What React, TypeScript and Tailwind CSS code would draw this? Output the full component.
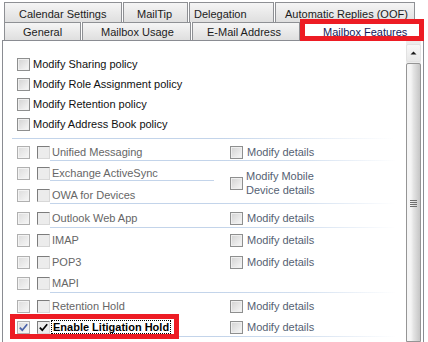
import React from "react";

type Kind = "std" | "dis" | "sunk";

function Check({ color }: { color: string }) {
  return (
    <svg width="11" height="11" viewBox="0 0 11 11" className="absolute left-0 top-0">
      <path d="M1.8 5.6 L4.3 8.2 L9.2 2.2" fill="none" stroke={color} strokeWidth="1.7" />
    </svg>
  );
}

function Box({ kind, checked }: { kind: Kind; checked?: string }) {
  const cls =
    kind === "std"
      ? "border border-[#8e8f8f] bg-gradient-to-br from-[#d2d2d2] to-[#f8f8f8] shadow-[inset_0_0_0_1px_#efefef]"
      : kind === "dis"
      ? "border border-[#b0b0b0] bg-gradient-to-br from-[#dcdcdc] to-[#f7f7f7] shadow-[inset_0_0_0_1px_#f3f3f3]"
      : "border border-t-[#7c7c7c] border-l-[#7c7c7c] border-b-[#d8d8d8] border-r-[#d8d8d8] bg-[#ececec]";
  return (
    <div className={`w-[13px] h-[13px] shrink-0 relative ${cls}`}>
      {checked ? <Check color={checked} /> : null}
    </div>
  );
}

function TopItem({ label, first }: { label: string; first?: boolean }) {
  return (
    <div className={`h-[14px] flex items-center pl-[14px] ${first ? "" : "mt-[6px]"}`}>
      <Box kind="std" />
      <span className="ml-[3px] leading-[14px] whitespace-nowrap text-[#111111]">{label}</span>
    </div>
  );
}

function LeftItem({ label, cls }: { label: string; cls: string }) {
  return (
    <div className={`h-[14px] flex items-center pl-[14px] ${cls}`}>
      <Box kind="dis" />
      <div className="w-[7px]" />
      <Box kind="sunk" />
      <span className="ml-[2px] leading-[14px] whitespace-nowrap text-[#666666]">{label}</span>
    </div>
  );
}

function RightItem({ cls }: { cls: string }) {
  return (
    <div className={`h-[14px] flex items-center pl-[16px] ${cls}`}>
      <Box kind="std" />
      <span className="ml-[4px] leading-[14px] whitespace-nowrap text-[#555f73]">Modify details</span>
    </div>
  );
}

function LeftLine() {
  return <div className="h-px w-[164px] ml-[47px] bg-[#c3d4ea] shrink-0" />;
}

function RightLine() {
  return <div className="h-px w-[182px] bg-gradient-to-r from-[#c3d4ea] via-[#d3e0f0] to-transparent shrink-0" />;
}

function Tab({ w, pl, h, label, selected }: { w: string; pl: string; h: string; label: string; selected?: boolean }) {
  return (
    <div
      className={`${w} ${h} ${pl} shrink-0 border border-b-0 border-[#8e9094] flex items-center whitespace-nowrap overflow-hidden ${
        selected ? "bg-white text-[#14185a]" : "bg-gradient-to-b from-[#f5f5f5] to-[#dfdfdf] text-[#1c1c1c]"
      }`}
    >
      <span className="leading-[13px]">{label}</span>
    </div>
  );
}

export default function App() {
  return (
    <div className="w-[428px] h-[342px] bg-white overflow-hidden relative font-['Liberation_Sans',Arial,sans-serif] text-[11px] flex flex-col">
      {/* tab row 1 */}
      <div className="flex pl-[4px] pt-[2px] gap-[1px]">
        <Tab w="w-[118px]" h="h-[20px] pt-[3px]" pl="pl-[14px]" label="Calendar Settings" />
        <Tab w="w-[65px]" h="h-[20px] pt-[3px]" pl="pl-[13px]" label="MailTip" />
        <Tab w="w-[85px]" h="h-[20px] pt-[3px]" pl="pl-[4px]" label="Delegation" />
        <Tab w="w-[140px]" h="h-[20px] pt-[3px]" pl="pl-[9px]" label="Automatic Replies (OOF)" />
      </div>
      {/* tab row 2 */}
      <div className="flex pl-[4px] gap-[1px]">
        <Tab w="w-[77px]" h="h-[18px] pt-[2px]" pl="pl-[18px]" label="General" />
        <Tab w="w-[109px]" h="h-[18px] pt-[2px]" pl="pl-[18px]" label="Mailbox Usage" />
        <Tab w="w-[108px]" h="h-[18px] pt-[2px]" pl="pl-[14px]" label="E-Mail Address" />
        <Tab w="w-[121px]" h="h-[18px] pt-[2px]" pl="pl-[21px]" label="Mailbox Features" selected />
      </div>

      {/* panel */}
      <div className="ml-[2px] w-[422px] flex-1 border-t border-l border-r border-[#8a8c92] flex min-h-0">
        <div className="w-[403px] flex flex-col">
          {/* top section */}
          <div className="pt-[16px] flex flex-col">
            <TopItem first label="Modify Sharing policy" />
            <TopItem label="Modify Role Assignment policy" />
            <TopItem label="Modify Retention policy" />
            <TopItem label="Modify Address Book policy" />
          </div>
          <div className="mt-[7px] ml-[9px] h-px w-[382px] bg-gradient-to-r from-[#c3d4ea] from-55% to-transparent" />

          {/* block A: Unified Messaging */}
          <div className="flex h-[22px]">
            <div className="w-[211px] flex flex-col">
              <LeftItem label="Unified Messaging" cls="mt-[6px]" />
              <div className="mt-auto"><LeftLine /></div>
            </div>
            <div className="flex-1 flex flex-col">
              <RightItem cls="mt-[6px]" />
              <div className="mt-auto"><RightLine /></div>
            </div>
          </div>

          {/* block B: ActiveSync + OWA devices */}
          <div className="flex h-[43px]">
            <div className="w-[211px] flex flex-col">
              <LeftItem label="Exchange ActiveSync" cls="mt-[5px]" />
              <LeftLine />
              <LeftItem label="OWA for Devices" cls="mt-[7px]" />
              <div className="mt-auto"><LeftLine /></div>
            </div>
            <div className="flex-1 flex flex-col">
              <div className="flex-1 flex items-center pl-[16px] pt-[2px]">
                <Box kind="std" />
                <span className="ml-[3px] leading-[14px] text-[#555f73]">
                  Modify Mobile
                  <br />
                  Device details
                </span>
              </div>
              <RightLine />
            </div>
          </div>

          {/* block C: Outlook Web App */}
          <div className="flex h-[24px]">
            <div className="w-[211px] flex flex-col">
              <LeftItem label="Outlook Web App" cls="mt-[7px]" />
              <div className="mt-auto"><LeftLine /></div>
            </div>
            <div className="flex-1 flex flex-col">
              <RightItem cls="mt-[7px]" />
              <div className="mt-auto"><RightLine /></div>
            </div>
          </div>

          {/* block D: IMAP / POP3 / MAPI */}
          <div className="flex h-[65px]">
            <div className="w-[211px] flex flex-col">
              <LeftItem label="IMAP" cls="mt-[5px]" />
              <LeftItem label="POP3" cls="mt-[8px]" />
              <LeftItem label="MAPI" cls="mt-[7px]" />
              <div className="mt-auto"><LeftLine /></div>
            </div>
            <div className="flex-1 flex flex-col">
              <RightItem cls="mt-[5px]" />
              <RightItem cls="mt-[8px]" />
              <div className="mt-auto"><RightLine /></div>
            </div>
          </div>

          {/* block E: Retention / Litigation */}
          <div className="flex h-[44px]">
            <div className="w-[211px] flex flex-col">
              <LeftItem label="Retention Hold" cls="mt-[6px]" />
              <div className="h-[14px] flex items-center pl-[14px] mt-[7px]">
                <Box kind="dis" checked="#4a62a8" />
                <div className="w-[7px]" />
                <Box kind="sunk" checked="#000000" />
                <span className="ml-[1px] h-[14px] border border-dotted border-black pl-[1px] pr-[1px] leading-[12px] font-bold whitespace-nowrap text-black">
                  Enable Litigation Hold
                </span>
              </div>
              <div className="mt-auto"><LeftLine /></div>
            </div>
            <div className="flex-1 flex flex-col">
              <RightItem cls="mt-[6px]" />
              <RightItem cls="mt-[7px]" />
              <div className="mt-auto"><RightLine /></div>
            </div>
          </div>
        </div>

        {/* scrollbar */}
        <div className="w-[15px] bg-[#ececec] flex flex-col pt-[3px]">
          <div className="h-[18px] border border-[#e2e2e2] rounded-[2px] bg-gradient-to-b from-[#f8f8f8] to-[#e8e8e8] flex items-center justify-center">
            <svg width="7" height="4" viewBox="0 0 7 4">
              <path d="M0.5 3.5 L3.5 0.5 L6.5 3.5 Z" fill="#1a1a1a" />
            </svg>
          </div>
          <div className="mt-[1px] flex-1 border border-[#959595] rounded-t-[2px] bg-gradient-to-r from-[#f5f5f5] from-30% via-[#e4e4e4] to-[#c6c6c6] flex flex-col items-center">
            <div className="mt-[136px] flex flex-col gap-[1px]">
              <div className="w-[7px] h-px bg-[#6f6f6f]" />
              <div className="w-[7px] h-px bg-[#6f6f6f]" />
              <div className="w-[7px] h-px bg-[#6f6f6f]" />
              <div className="w-[7px] h-px bg-[#6f6f6f]" />
            </div>
          </div>
        </div>
        <div className="w-[2px] bg-white" />
      </div>

      {/* red annotation boxes */}
      <div className="absolute left-[300px] top-[19px] w-[124px] h-[22px] border-[5px] border-[#ed1c24]" />
      <div className="absolute left-[10px] top-[314px] w-[169px] h-[25px] border-[5px] border-[#ed1c24]" />
    </div>
  );
}
